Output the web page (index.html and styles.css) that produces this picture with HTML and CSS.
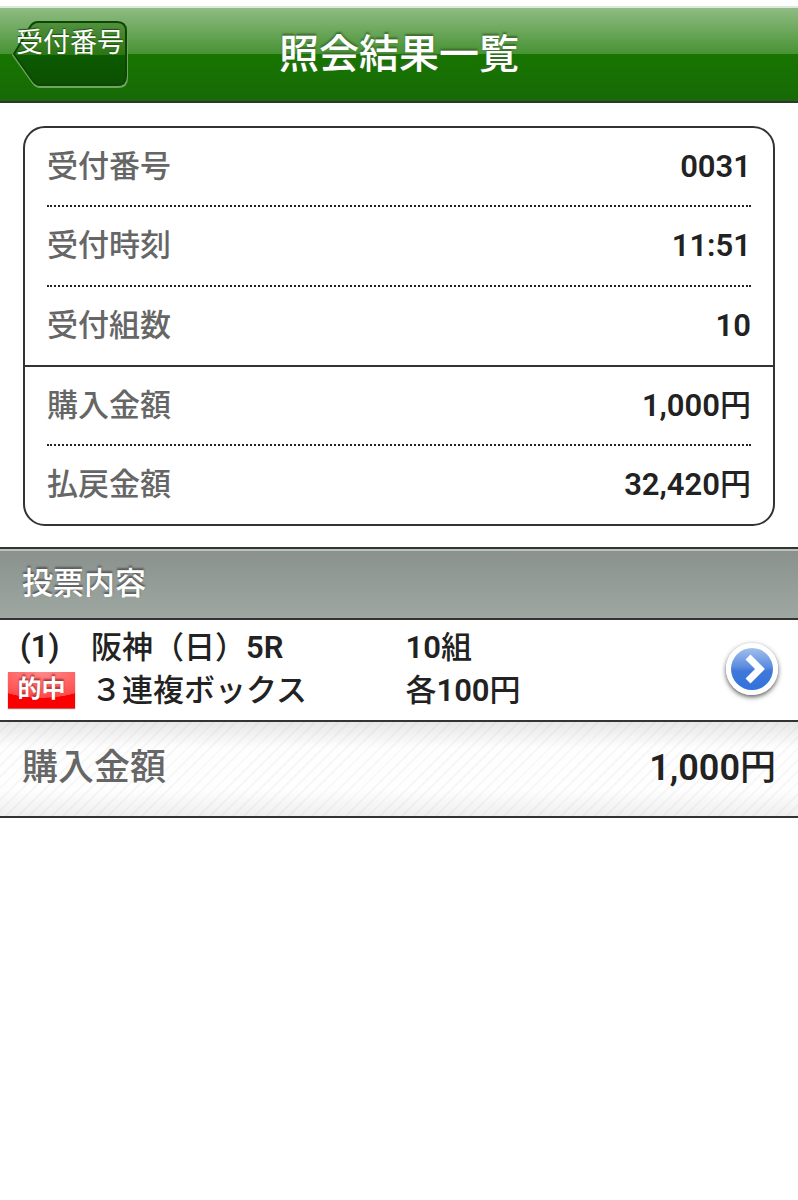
FILE: index.html
```
<!DOCTYPE html>
<html lang="ja">
<head>
    <meta charset="UTF-8">
    <meta name="viewport" content="width=device-width, initial-scale=1.0">
    <title>照会結果一覧</title>
    <link rel="stylesheet" href="styles.css">
</head>
<body>
    <header class="header">
        <button type="button" class="back-btn">
            <svg class="back-shape" viewBox="0 0 116 68" aria-hidden="true">
                <defs>
                    <linearGradient id="backFill" x1="0" y1="0" x2="0" y2="1">
                        <stop offset="0" stop-color="#53913f"/>
                        <stop offset="0.52" stop-color="#2c7414"/>
                        <stop offset="0.52" stop-color="#0b5b00"/>
                        <stop offset="1" stop-color="#0d4f03"/>
                    </linearGradient>
                </defs>
                <path d="M26 3H106Q115 3 115 12V57Q115 66 106 66H28Q24 66 21 62L1 34L18 8Q21 3 26 3Z" fill="none" stroke="#6fa75f" stroke-width="2"/>
                <path d="M26 1H105Q114 1 114 10V55Q114 64 105 64H28Q24 64 21 60L2 33L18 6Q21 1 26 1Z" fill="url(#backFill)" stroke="#0d4704" stroke-width="2"/>
            </svg>
            <span class="back-text">受付番号</span>
        </button>
        <h1>照会結果一覧</h1>
    </header>

    <main>
        <dl class="card">
            <div class="row"><dt>受付番号</dt><dd>0031</dd></div>
            <div class="row"><dt>受付時刻</dt><dd>11:51</dd></div>
            <div class="row"><dt>受付組数</dt><dd>10</dd></div>
            <div class="row section-start"><dt>購入金額</dt><dd>1,000<span class="kanji">円</span></dd></div>
            <div class="row"><dt>払戻金額</dt><dd>32,420<span class="kanji">円</span></dd></div>
        </dl>

        <h2>投票内容</h2>

        <div class="bet">
            <div class="bet-no">
                <span class="no">(1)</span>
                <span class="hit">的中</span>
            </div>
            <div class="bet-race">
                <div><span class="kanji">阪神（日）</span>5R</div>
                <div class="kanji">３連複ボックス</div>
            </div>
            <div class="bet-amount">
                <div>10<span class="kanji">組</span></div>
                <div><span class="kanji">各</span>100<span class="kanji">円</span></div>
            </div>
            <button type="button" class="detail-btn" aria-label="詳細">
                <svg viewBox="0 0 44 44" aria-hidden="true">
                    <defs>
                        <linearGradient id="blue" x1="0" y1="0" x2="0" y2="1">
                            <stop offset="0" stop-color="#a3bfec"/>
                            <stop offset="0.45" stop-color="#5b8ce0"/>
                            <stop offset="0.55" stop-color="#3f78da"/>
                            <stop offset="1" stop-color="#3272dc"/>
                        </linearGradient>
                    </defs>
                    <circle cx="22" cy="22" r="21" fill="url(#blue)"/>
                    <path d="M18 10L30 22L18 34" fill="none" stroke="#fff" stroke-width="7"/>
                </svg>
            </button>
        </div>

        <div class="total">
            <span class="total-label">購入金額</span>
            <span>1,000<span class="kanji">円</span></span>
        </div>
    </main>
</body>
</html>
```
FILE: styles.css
```
* {
    box-sizing: border-box;
}

body {
    font-family: Roboto, "Noto Sans CJK JP", sans-serif;
    font-size: 31px;
    font-weight: 600;
    line-height: 40px;
    margin: 0;
    padding-top: 6px;
    color: #222;
    background: #fff;
}

button {
    border: none;
    padding: 0;
    background: none;
    font: inherit;
    cursor: pointer;
}

.header {
    display: grid;
    grid-template-columns: 1fr auto 1fr;
    align-items: start;
    height: 97px;
    padding: 0 12px;
    border-top: 2px solid #dce8d9;
    border-bottom: 2px solid #333;
    background: linear-gradient(#8fbc83, #479233 50%, #187500 50%, #176a07);
    color: #fff;
}

.back-btn {
    position: relative;
    justify-self: start;
    width: 116px;
    height: 68px;
    margin-top: 13px;
    color: #fff;
    font-size: 27px;
    font-weight: 400;
}

.back-shape {
    position: absolute;
    inset: 0;
    width: 100%;
    height: 100%;
}

.back-text {
    position: relative;
    display: block;
    height: 68px;
    line-height: 44px;
    white-space: nowrap;
    text-shadow: 0 -1px 1px #1c4d10;
}

h1 {
    margin: 0;
    font-size: 40px;
    font-weight: 500;
    line-height: 94px;
    text-shadow: 0 -2px 2px #3a6b2c;
}

.kanji {
    font-weight: 500;
}

.card {
    margin: 23px 23px 21px;
    border: 2px solid #333;
    border-radius: 22px;
}

.row {
    display: flex;
    justify-content: space-between;
    align-items: center;
    height: 80px;
    margin: 0 22px;
    border-bottom: 2px dotted #222;
}

.row:first-child {
    height: 79px;
}

.row:has(+ .section-start) {
    height: 78px;
    border-bottom: none;
}

.section-start {
    height: 79px;
    margin: 0;
    padding: 0 22px;
    border-top: 2px solid #333;
    border-bottom: none;
}

.section-start + .row {
    border-top: 2px dotted #222;
    border-bottom: none;
}

dt,
.total-label {
    color: #666;
    font-weight: 500;
}

dd {
    margin: 0;
}

h2 {
    margin: 0;
    padding-left: 22px;
    border-top: 2px solid #333;
    border-bottom: 2px solid #333;
    background: linear-gradient(#8a918c, #9ea7a1);
    box-shadow: inset 0 2px 0 #bcc3be;
    color: #fff;
    font-size: 31px;
    font-weight: 500;
    line-height: 69px;
    text-shadow: 0 -2px 2px #555;
}

.bet {
    display: grid;
    grid-template-columns: 67px 49fr 50fr 52px;
    column-gap: 16px;
    align-items: center;
    height: 100px;
    padding: 0 20px 2px 8px;
    line-height: 43px;
}

.bet-no {
    display: flex;
    flex-direction: column;
    gap: 8px;
}

.no {
    padding-left: 12px;
    line-height: 34px;
}

.hit {
    height: 36px;
    background: radial-gradient(ellipse 60px 26px at 50% 0, #ff8a8a, #ff4a4a 98%, #fb0000 100%);
    box-shadow: 0 1px 1px #b66;
    color: #fff;
    font-size: 24px;
    line-height: 34px;
    text-align: center;
    text-shadow: 0 -2px 2px #a33;
}

.detail-btn {
    width: 52px;
    height: 52px;
    border: 4px solid #fff;
    border-radius: 50%;
    box-shadow: 0 2px 5px #555;
}

.detail-btn svg {
    display: block;
}

.total {
    display: flex;
    justify-content: space-between;
    align-items: center;
    height: 98px;
    padding: 0 22px 2px;
    border-top: 2px solid #333;
    border-bottom: 2px solid #333;
    background:
        linear-gradient(rgba(0, 0, 0, 0.09), transparent 28%, transparent 72%, rgba(0, 0, 0, 0.06)),
        repeating-linear-gradient(135deg, #fefefe 0 6px, #f7f7f7 6px 8px);
    font-size: 36px;
}
```
